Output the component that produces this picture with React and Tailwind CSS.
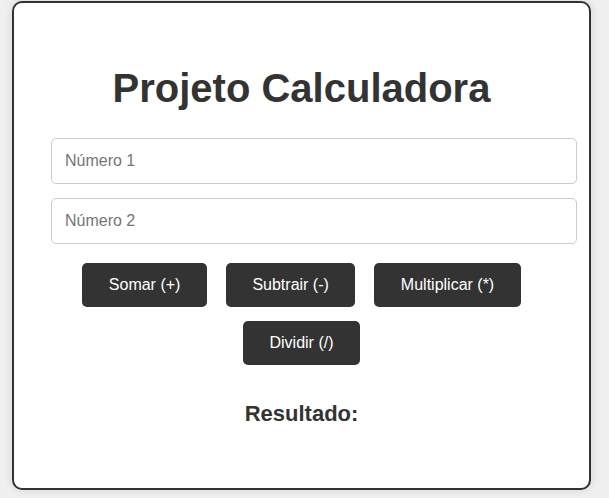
export default function App() {
  const ops = ['Somar (+)', 'Subtrair (-)', 'Multiplicar (*)', 'Dividir (/)'];

  return (
    <div className="min-h-[498px] bg-[#f0f0f0] pt-px font-['Liberation_Sans',Arial,sans-serif]">
      <div className="ml-[12px] w-[579px] rounded-[10px] border-2 border-[#333] bg-white px-[37px] pt-[62px] pb-[62px] shadow-[0_0_10px_rgba(0,0,0,0.12)]">
        <h1 className="text-center text-[40px] leading-[46px] font-bold text-[#333]">
          Projeto Calculadora
        </h1>

        <div className="mt-[27px] flex flex-col gap-[14px]">
          <input
            type="number"
            placeholder="Número 1"
            className="h-[46px] w-[526px] rounded-[5px] border border-[#ccc] px-[13px] text-[16px] text-[#333] placeholder:text-[#757575] outline-none"
          />
          <input
            type="number"
            placeholder="Número 2"
            className="h-[46px] w-[526px] rounded-[5px] border border-[#ccc] px-[13px] text-[16px] text-[#333] placeholder:text-[#757575] outline-none"
          />
        </div>

        <div className="mt-[19px] flex flex-wrap justify-center gap-x-[19px] gap-y-[14px]">
          {ops.map((op) => (
            <button
              key={op}
              className="h-[44px] rounded-[5px] bg-[#333] px-[26.5px] text-[16px] text-white"
            >
              {op}
            </button>
          ))}
        </div>

        <h2 className="mt-[36px] text-center text-[22px] leading-[25px] font-bold text-[#333]">
          Resultado:
        </h2>
      </div>
    </div>
  );
}
